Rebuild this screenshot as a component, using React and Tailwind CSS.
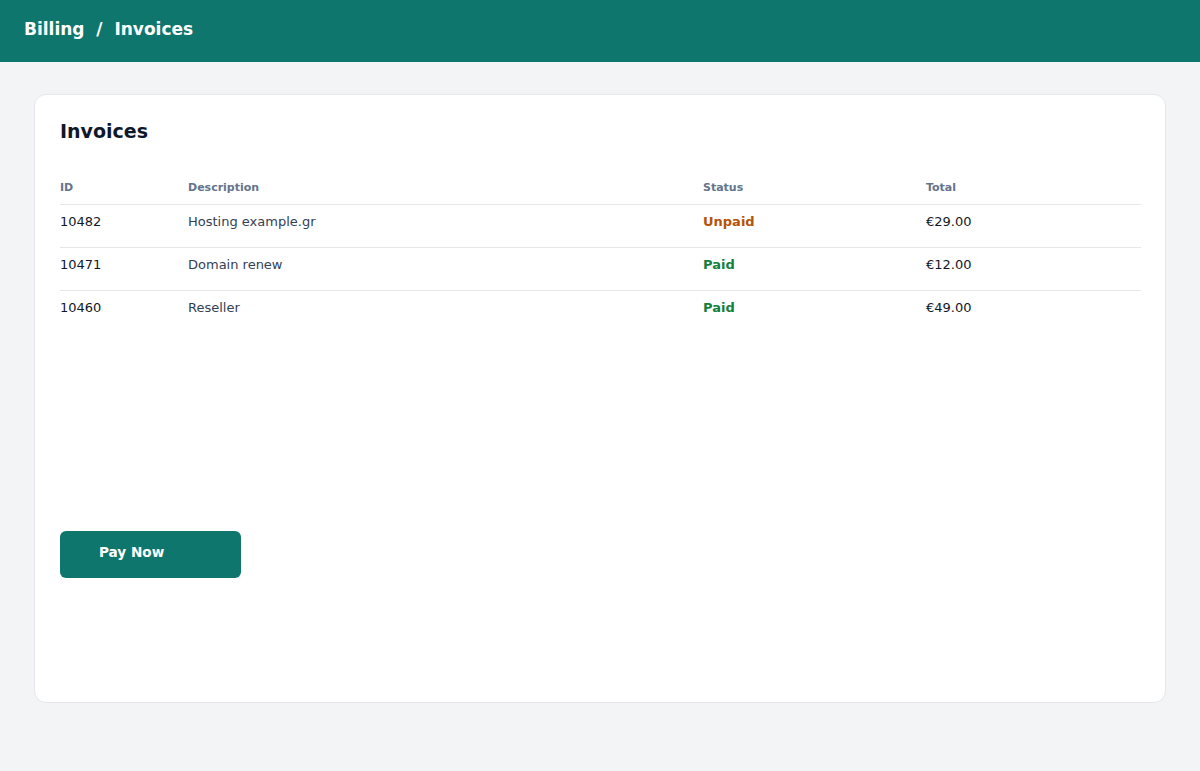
import React from "react";

const invoices = [
  { id: "10482", description: "Hosting example.gr", status: "Unpaid", total: "€29.00" },
  { id: "10471", description: "Domain renew", status: "Paid", total: "€12.00" },
  { id: "10460", description: "Reseller", status: "Paid", total: "€49.00" },
];

const App = () => {
  return (
    <div
      className="min-h-screen bg-[#f3f4f6]"
      style={{ fontFamily: '"DejaVu Sans", Verdana, sans-serif' }}
    >
      <header className="flex h-[62px] items-center bg-[#0f766e] px-6 pb-[2px]">
        <h1 className="text-[17px] font-bold text-white">Billing &nbsp;/&nbsp; Invoices</h1>
      </header>

      <main className="px-[34px] pt-8">
        <div className="h-[609px] rounded-xl border border-[#e5e7eb] bg-white pl-[25px] pr-6 pt-[22px]">
          <h2 className="text-[19px] font-bold leading-7 text-[#0f172a]">Invoices</h2>

          <table className="mt-[27px] w-full table-fixed border-collapse text-left">
            <colgroup>
              <col className="w-[128px]" />
              <col className="w-[515px]" />
              <col className="w-[223px]" />
              <col />
            </colgroup>
            <thead>
              <tr className="border-b border-[#e5e7eb]">
                <th className="pb-2 pt-2 text-[11px] font-bold leading-4 text-[#64748b]">ID</th>
                <th className="pb-2 pt-2 text-[11px] font-bold leading-4 text-[#64748b]">Description</th>
                <th className="pb-2 pt-2 text-[11px] font-bold leading-4 text-[#64748b]">Status</th>
                <th className="pb-2 pt-2 text-[11px] font-bold leading-4 text-[#64748b]">Total</th>
              </tr>
            </thead>
            <tbody>
              {invoices.map((inv, i) => (
                <tr
                  key={inv.id}
                  className={i < invoices.length - 1 ? "border-b border-[#e5e7eb]" : ""}
                >
                  <td className="pb-[15px] pt-[7px] text-[13px] leading-5 text-[#111827]">{inv.id}</td>
                  <td className="pb-[15px] pt-[7px] text-[13px] leading-5 text-[#334155]">{inv.description}</td>
                  <td
                    className={`pb-[15px] pt-[7px] text-[13px] font-bold leading-5 ${
                      inv.status === "Paid" ? "text-[#15803d]" : "text-[#b45309]"
                    }`}
                  >
                    {inv.status}
                  </td>
                  <td className="pb-[15px] pt-[7px] text-[13px] leading-5 text-[#111827]">{inv.total}</td>
                </tr>
              ))}
            </tbody>
          </table>

          <button className="mt-[198px] block h-[47px] w-[181px] rounded-md bg-[#0f766e] pb-[5px] pl-[39px] text-left text-[13.6px] font-bold leading-5 text-white">
            Pay Now
          </button>
        </div>
      </main>
    </div>
  );
};

export default App;
